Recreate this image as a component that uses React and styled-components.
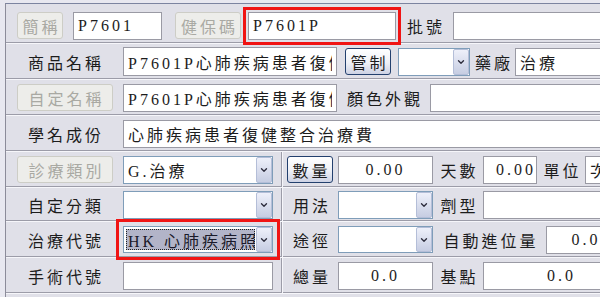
import React from 'react'
import styled, { createGlobalStyle, css } from 'styled-components'
import { ChevronDown } from 'lucide-react'

const Global = createGlobalStyle`
  html, body {
    margin: 0;
    padding: 0;
    background: #e8e8f0;
    overflow: hidden;
  }
  body {
    font-family: "Liberation Serif", "Noto Sans CJK TC", serif;
    font-size: 16px;
    letter-spacing: 3px;
    color: #1c1c1c;
  }
`

const Frame = styled.div`
  width: 760px;
  height: 300px;
  margin: 3px 0 0 5px;
  background: #e0e0e8;
  border-top: 1px solid #7c84a0;
  border-left: 1px solid #8c8c9a;
`

const Row = styled.div`
  display: flex;
  align-items: center;
  box-sizing: border-box;
  height: ${p => p.$h || 36}px;
  padding-left: ${p => p.$pad || 0}px;
  padding-top: ${p => p.$top || 0}px;
  border-bottom: 1px solid #f6f6fa;
  box-shadow: inset 0 -1px 0 #9c9ca8;
`

const LeftCell = styled.div`
  display: flex;
  align-items: center;
  align-self: stretch;
  flex: none;
  width: 277px;
  box-sizing: border-box;
  padding-left: ${p => p.$pad || 0}px;
  border-right: 1px solid #f6f6fa;
  box-shadow: inset -1px 0 0 #9c9ca8;
`

const RightCell = styled.div`
  display: flex;
  align-items: center;
  padding-left: ${p => p.$pad || 0}px;
`

const Label = styled.div`
  flex: none;
  width: ${p => p.$w}px;
  box-sizing: border-box;
  padding-left: 3px;
  text-align: center;
  white-space: nowrap;
`

const Field = styled.input`
  flex: none;
  width: ${p => p.$w}px;
  height: ${p => p.$h || 28}px;
  margin: 0 0 0 ${p => p.$ml || 0}px;
  box-sizing: border-box;
  border: 1px solid #9a9aa4;
  background: #fff;
  padding: 0 ${p => (p.$align === 'right' ? 0 : 4)}px 0 4px;
  font: inherit;
  letter-spacing: inherit;
  color: #1c1c1c;
  text-align: ${p => p.$align || 'left'};
  outline: ${p => (p.$mark ? '3px solid #f01414' : 'none')};
  outline-offset: 2px;
`

const Btn = styled.button`
  flex: none;
  width: ${p => p.$w}px;
  height: 27px;
  margin-left: ${p => p.$ml || 0}px;
  padding: 0 0 0 3px;
  border-radius: 3px;
  font: inherit;
  letter-spacing: inherit;
  white-space: nowrap;
  ${p =>
    p.disabled
      ? css`
          border: 1px solid #cdcdc6;
          background: #ededea;
          color: #a9a9a3;
        `
      : css`
          border: 1px solid #23406e;
          background: linear-gradient(#ffffff, #eef0f6 55%, #cdd2e4);
          color: #1c1c1c;
        `}
`

const SelectBox = styled.div`
  flex: none;
  display: flex;
  width: ${p => p.$w}px;
  height: ${p => p.$h || 28}px;
  margin-left: ${p => p.$ml || 0}px;
  box-sizing: border-box;
  border: 1px solid #7f9db9;
  background: #fff;
  outline: ${p => (p.$mark ? '3px solid #f01414' : 'none')};
  outline-offset: 4px;
`

const SelectText = styled.div`
  flex: 1;
  min-width: 0;
  display: flex;
  align-items: center;
  padding: 0 0 0 4px;
  overflow: hidden;
  white-space: nowrap;
  ${p =>
    p.$selected &&
    css`
      margin: 2px 1px 2px 2px;
      padding-left: 2px;
      background: #b2b4c8;
      outline: 1px dotted #222;
      outline-offset: -1px;
      color: #1a1a2a;
    `}
`

const ArrowBtn = styled.div`
  flex: none;
  width: 16px;
  margin: 0;
  box-sizing: border-box;
  border: 1px solid #b4bed8;
  border-radius: 2px;
  background: linear-gradient(#eef0fa, #c6cde2);
  display: flex;
  align-items: center;
  justify-content: center;
  color: #2c2c3c;
`

function Select({ w, h, ml, mark, value, selected }) {
  return (
    <SelectBox $w={w} $h={h} $ml={ml} $mark={mark}>
      <SelectText $selected={selected}>{value}</SelectText>
      <ArrowBtn>
        <ChevronDown size={10} strokeWidth={3.2} />
      </ArrowBtn>
    </SelectBox>
  )
}

export default function App() {
  return (
    <>
      <Global />
      <Frame>
        <Row $h={40} $top={4} $pad={11}>
          <Btn disabled $w={46}>簡稱</Btn>
          <Field readOnly $w={89} $ml={10} value="P7601" />
          <Btn disabled $w={66} $ml={13}>健保碼</Btn>
          <Field readOnly $w={148} $ml={7} $mark value="P7601P" />
          <Label $w={57}>批號</Label>
          <Field readOnly $w={220} value="" />
        </Row>

        <Row $h={36}>
          <Label $w={117}>商品名稱</Label>
          <Field readOnly $w={214} $h={29} value="P7601P心肺疾病患者復健整合治療費" />
          <Btn $w={46} $ml={8}>管制</Btn>
          <Select w={72} ml={7} value="" />
          <Label $w={45}>藥廠</Label>
          <Field readOnly $w={220} value="治療" />
        </Row>

        <Row $h={36} $pad={11}>
          <Btn disabled $w={96}>自定名稱</Btn>
          <Field readOnly $w={214} $ml={10} value="P7601P心肺疾病患者復健整合治療費" />
          <Label $w={93}>顏色外觀</Label>
          <Field readOnly $w={220} value="" />
        </Row>

        <Row $h={36}>
          <Label $w={117}>學名成份</Label>
          <Field readOnly $w={540} value="心肺疾病患者復健整合治療費" />
        </Row>

        <Row $h={36}>
          <LeftCell $pad={11}>
            <Btn disabled $w={96}>診療類別</Btn>
            <Select w={150} ml={10} value="G.治療" />
          </LeftCell>
          <RightCell $pad={4}>
            <Btn $w={46}>數量</Btn>
            <Field readOnly $w={95} $ml={5} $align="center" value="0.00" />
            <Label $w={50}>天數</Label>
            <Field readOnly $w={54} $align="right" value="0.00" />
            <Label $w={48}>單位</Label>
            <Field readOnly $w={100} value="次" />
          </RightCell>
        </Row>

        <Row $h={34}>
          <LeftCell>
            <Label $w={117}>自定分類</Label>
            <Select w={150} value="" />
          </LeftCell>
          <RightCell>
            <Label $w={55}>用法</Label>
            <Select w={95} value="" />
            <Label $w={50}>劑型</Label>
            <Field readOnly $w={200} value="" />
          </RightCell>
        </Row>

        <Row $h={36}>
          <LeftCell>
            <Label $w={117}>治療代號</Label>
            <Select w={150} h={27} mark selected value="HK 心肺疾病照護" />
          </LeftCell>
          <RightCell>
            <Label $w={55}>途徑</Label>
            <Select w={95} h={27} value="" />
            <Label $w={113}>自動進位量</Label>
            <Field readOnly $w={80} $align="center" value="0.0" />
          </RightCell>
        </Row>

        <Row $h={36}>
          <LeftCell>
            <Label $w={117}>手術代號</Label>
            <Field readOnly $w={150} value="" />
          </LeftCell>
          <RightCell>
            <Label $w={55}>總量</Label>
            <Field readOnly $w={95} $align="center" value="0.0" />
            <Label $w={50}>基點</Label>
            <Field readOnly $w={157} $align="center" value="0.0" />
          </RightCell>
        </Row>
      </Frame>
    </>
  )
}
